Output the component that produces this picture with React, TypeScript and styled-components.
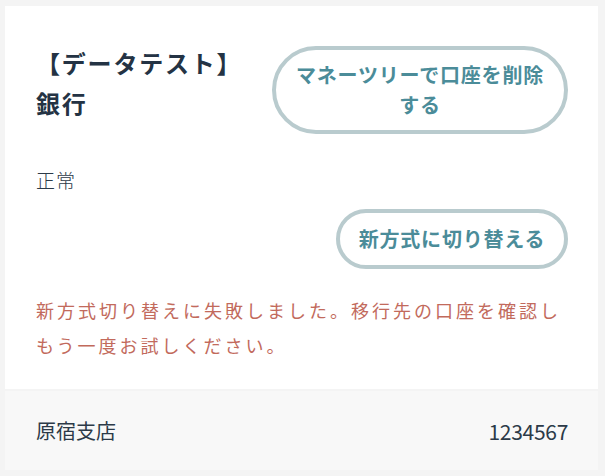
import React from "react";
import styled, { createGlobalStyle } from "styled-components";

const GlobalStyle = createGlobalStyle`
  html, body {
    margin: 0;
    padding: 0;
    background: #f4f4f4;
  }
  body {
    font-family: "Noto Sans CJK JP", "Noto Sans", sans-serif;
    color: #2c3a48;
  }
  * { box-sizing: border-box; }
`;

const Page = styled.div`
  padding: 6px 7px 6px 5px;
  width: 605px;
  height: 476px;
`;

const Card = styled.div`
  background: #ffffff;
  display: flex;
  flex-direction: column;
`;

const Body = styled.div`
  padding: 37px 30px 26px 31px;
  display: flex;
  flex-direction: column;
`;

const Header = styled.div`
  display: flex;
  justify-content: space-between;
  align-items: flex-start;
`;

const Title = styled.h2`
  margin: 0;
  font-size: 24px;
  line-height: 40px;
  font-weight: 700;
  letter-spacing: 1.8px;
  color: #243344;
  width: 220px;
`;

const PillButton = styled.button<{ $wide?: boolean }>`
  font-family: "Noto Sans CJK JP", "Noto Sans", sans-serif;
  background: #ffffff;
  border: 4px solid #b9cbce;
  border-radius: 999px;
  color: #4b8c99;
  font-weight: 700;
  font-size: 20px;
  letter-spacing: 0.8px;
  line-height: 30px;
  text-align: center;
  cursor: pointer;
  width: ${(p) => (p.$wide ? "296px" : "232px")};
  height: ${(p) => (p.$wide ? "88px" : "60px")};
  padding: 0 12px;
  margin-top: ${(p) => (p.$wide ? "3px" : "0")};
`;

const Status = styled.div`
  margin-top: 32px;
  font-size: 19px;
  line-height: 28px;
  letter-spacing: 1px;
  font-weight: 300;
  color: #2c3a48;
`;

const ActionRow = styled.div`
  margin-top: 15px;
  display: flex;
  justify-content: flex-end;
`;

const ErrorText = styled.p`
  margin: 24px 0 0;
  font-size: 18px;
  line-height: 35px;
  letter-spacing: 3px;
  color: #c26a5c;
`;

const Footer = styled.div`
  margin-top: 2px;
  background: #f8f8f8;
  height: 79px;
  padding: 0 30px 0 31px;
  display: flex;
  justify-content: space-between;
  align-items: center;
  font-size: 20px;
  color: #2c3a48;
`;

const Branch = styled.span`
  letter-spacing: 0px;
`;

const AccountNumber = styled.span`
  font-weight: 400;
  font-size: 21px;
  letter-spacing: -0.3px;
`;

export default function App() {
  return (
    <>
      <GlobalStyle />
      <Page>
        <Card>
          <Body>
            <Header>
              <Title>【データテスト】銀行</Title>
              <PillButton $wide>
                マネーツリーで口座を削除
                <br />
                する
              </PillButton>
            </Header>
            <Status>正常</Status>
            <ActionRow>
              <PillButton>新方式に切り替える</PillButton>
            </ActionRow>
            <ErrorText>
              新方式切り替えに失敗しました。移行先の口座を確認しもう一度お試しください。
            </ErrorText>
          </Body>
        </Card>
        <Footer>
          <Branch>原宿支店</Branch>
          <AccountNumber>1234567</AccountNumber>
        </Footer>
      </Page>
    </>
  );
}
